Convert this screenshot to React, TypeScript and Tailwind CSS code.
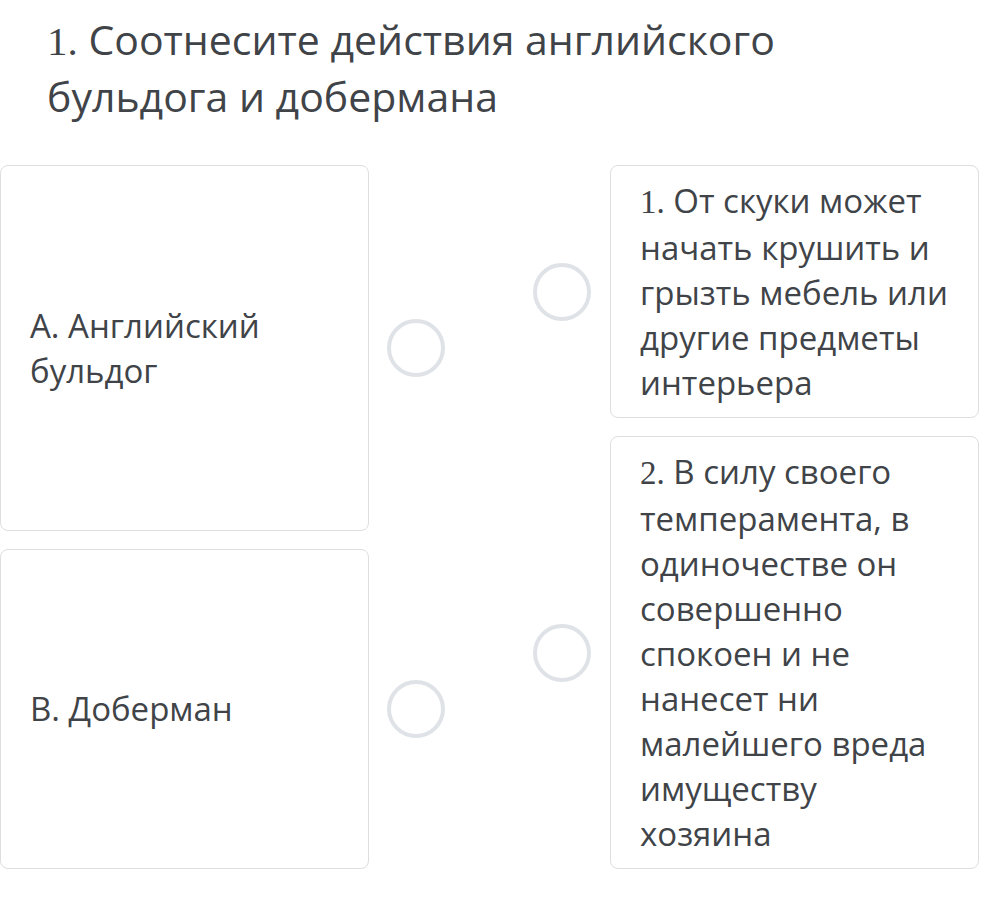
import React from 'react';

const font = { fontFamily: '"Open Sans", "Noto Sans", sans-serif' };

const Num = ({ n }: { n: string }) => (
  <span className="font-['Liberation_Serif',serif]">{n}</span>
);

const Circle = () => (
  <div className="w-[58px] h-[58px] shrink-0 rounded-full border-[4px] border-[#dfe3e7] bg-white" />
);

const LeftItem = ({ children }: { children: React.ReactNode }) => (
  <div className="grow flex items-center gap-[18px]">
    <div className="w-[369px] self-stretch flex items-center rounded-[8px] border border-[#dedede] bg-white pl-[29px] pr-[24px] py-[12px] text-[33px] leading-[45px] text-[#404448]">
      <div>{children}</div>
    </div>
    <Circle />
  </div>
);

const RightItem = ({ children }: { children: React.ReactNode }) => (
  <div className="flex items-center gap-[19px]">
    <Circle />
    <div className="w-[369px] rounded-[8px] border border-[#dedede] bg-white pl-[29px] pr-[30px] py-[12px] text-[33px] leading-[45px] text-[#404448]">
      {children}
    </div>
  </div>
);

export default function App() {
  return (
    <div className="min-h-[909px] w-[987px] bg-white" style={font}>
      <h1 className="w-[840px] pl-[47px] pt-[12px] text-[41px] leading-[55px] font-normal text-[#404448]">
        <Num n="1." /> Соотнесите действия английского бульдога и добермана
      </h1>

      <div className="mt-[41px] flex gap-[88px] pr-[8px]">
        {/* Left column */}
        <div className="flex flex-col gap-[18px]">
          <LeftItem>А. Английский бульдог</LeftItem>
          <LeftItem>В. Доберман</LeftItem>
        </div>

        {/* Right column */}
        <div className="flex flex-col gap-[18px]">
          <RightItem>
            <Num n="1." /> От скуки может начать крушить и грызть мебель или другие предметы интерьера
          </RightItem>
          <RightItem>
            <Num n="2." /> В силу своего темперамента, в одиночестве он совершенно спокоен и не нанесет ни малейшего вреда имуществу хозяина
          </RightItem>
        </div>
      </div>
    </div>
  );
}
